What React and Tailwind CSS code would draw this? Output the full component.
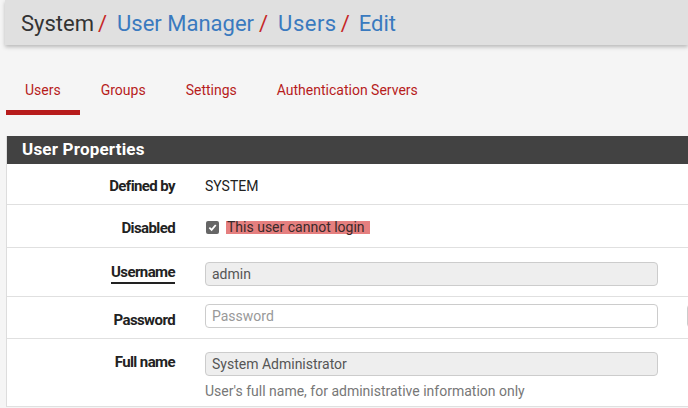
import React from 'react';

const Label = ({ children, underline }) => (
  <div className="w-[168px] shrink-0 text-right leading-[20px]">
    <span
      className={
        'text-[15px] font-bold text-[#222] tracking-[-0.6px] ' +
        (underline ? 'border-b-2 border-[#222] pb-[1px]' : '')
      }
    >
      {children}
    </span>
  </div>
);

const App = () => {
  return (
    <div className="w-[688px] h-[408px] overflow-hidden bg-[#f5f5f5] font-['Roboto',sans-serif]">
      <div className="ml-[5px] h-[45px] bg-[#e0e0e0] shadow-[0_2px_4px_rgba(0,0,0,0.25)] flex items-center pl-[16px] pt-[2px] text-[22px] text-[#3a7abf]">
        <span className="text-[#333]">System</span>
        <span className="text-[#c62828] ml-[4px] mr-[10px]">/</span>
        <span>User Manager</span>
        <span className="text-[#c62828] ml-[5px] mr-[10px]">/</span>
        <span className="tracking-[0.5px]">Users</span>
        <span className="text-[#c62828] ml-[4px] mr-[9px]">/</span>
        <span>Edit</span>
      </div>

      <div className="ml-[6px] mt-[30px] flex gap-[2px] text-[14px] text-[#b71c1c]">
        <div className="px-[19px] h-[40px] pt-[5px] border-b-[5px] border-[#b71c1c]">Users</div>
        <div className="px-[19px] h-[40px] pt-[5px]">Groups</div>
        <div className="px-[19px] h-[40px] pt-[5px]">Settings</div>
        <div className="px-[19px] h-[40px] pt-[5px]">Authentication Servers</div>
      </div>

      <div className="ml-[6px] mt-[21px] w-[720px] bg-white border-l border-[#ddd]">
        <div className="h-[28px] bg-[#424242] text-white text-[17px] font-bold flex items-center pl-[15px] tracking-[0.2px]">
          User Properties
        </div>

        <div className="h-[41px] flex items-center pt-[4px] border-b border-[#e0e0e0]">
          <Label>Defined by</Label>
          <div className="ml-[30px] text-[14px] text-[#222]">SYSTEM</div>
        </div>

        <div className="h-[43px] flex items-center pt-[3px] border-b border-[#e0e0e0]">
          <Label>Disabled</Label>
          <div className="ml-[31px] flex items-center text-[14px]">
            <span className="w-[13px] h-[13px] rounded-[2px] bg-[#666] flex items-center justify-center">
              <svg width="9" height="9" viewBox="0 0 10 10">
                <path d="M1.5 5.2 L4 7.6 L8.6 2.2" fill="none" stroke="#fff" strokeWidth="2" />
              </svg>
            </span>
            <span className="ml-[7px] pl-[1px] pr-[5px] bg-[#e57f7f] text-[#3a2a2a] leading-[13px]">
              This user cannot login
            </span>
          </div>
        </div>

        <div className="h-[49px] flex border-b border-[#e0e0e0] pt-[14px]">
          <Label underline>Username</Label>
          <div className="ml-[30px] w-[453px] h-[24px] rounded-[4px] border border-[#ccc] bg-[#eee] text-[14px] text-[#555] flex items-center pl-[6px]">
            admin
          </div>
        </div>

        <div className="h-[42px] flex border-b border-[#e0e0e0] pt-[7px]">
          <div className="pt-[6px]">
            <Label>Password</Label>
          </div>
          <div className="ml-[30px] w-[453px] h-[24px] rounded-[4px] border border-[#ccc] bg-white text-[14px] text-[#999] flex items-center pl-[6px]">
            Password
          </div>
          <div className="ml-[29px] w-[30px] h-[24px] rounded-[4px] border border-[#ccc] bg-white"></div>
        </div>

        <div className="h-[68px] flex border-b border-[#e0e0e0] pt-[13px]">
          <Label>Full name</Label>
          <div className="ml-[30px]">
            <div className="w-[453px] h-[24px] rounded-[4px] border border-[#ccc] bg-[#eee] text-[14px] text-[#555] flex items-center pl-[6px]">
              System Administrator
            </div>
            <div className="mt-[5px] text-[14px] text-[#777]">
              User's full name, for administrative information only
            </div>
          </div>
        </div>
      </div>
    </div>
  );
};

export default App;
